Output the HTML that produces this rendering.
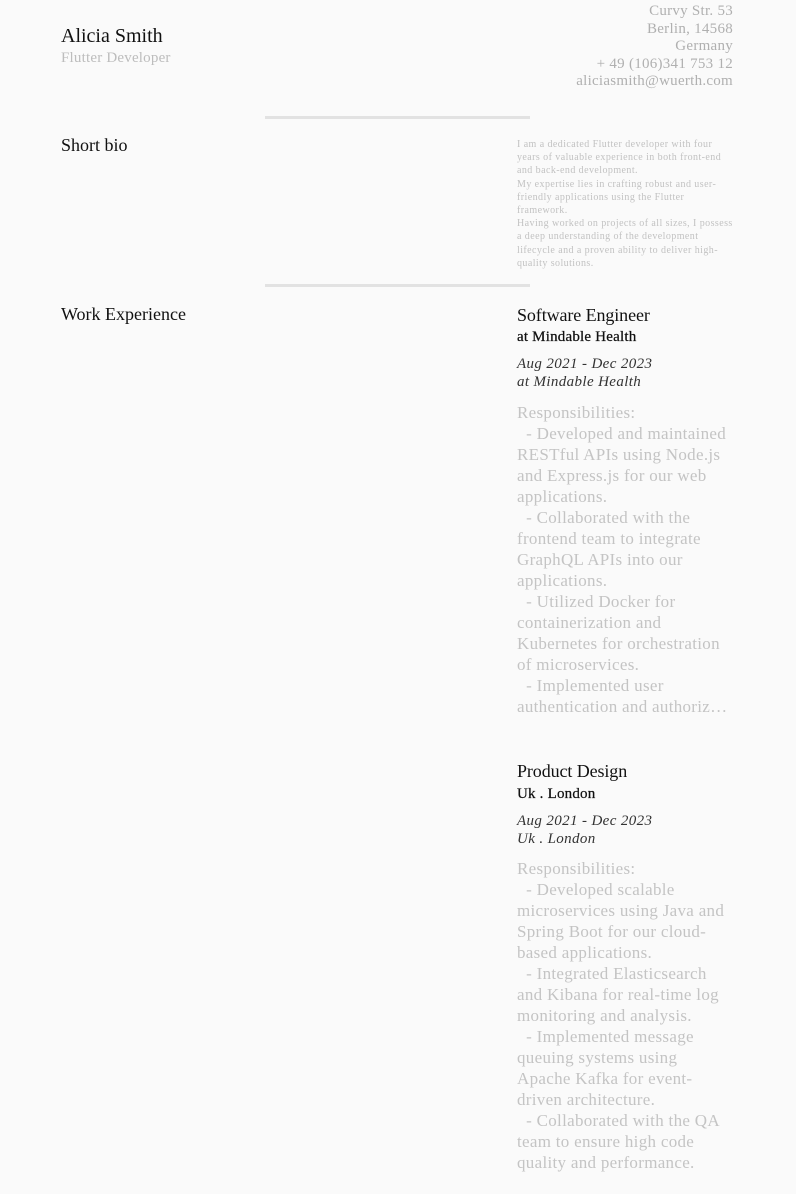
<!DOCTYPE html>
<html><head><meta charset="utf-8">
<style>
html,body{margin:0;padding:0;background:#fafafa;}
body{width:796px;height:1194px;position:relative;overflow:hidden;font-family:"Liberation Serif",serif;}
.a{position:absolute;white-space:nowrap;}
.name{left:61px;top:25px;font-size:20px;color:#111;letter-spacing:0px;}
.role{left:61px;top:50px;font-size:15px;color:#bdbdbd;letter-spacing:0.2px;}
.addr{right:63px;top:3px;font-size:15px;line-height:17.6px;color:#b0b0b0;text-align:right;letter-spacing:0.27px;}
.hr{position:absolute;left:265px;width:265px;height:3px;background:#e2e2e2;}
.h{font-size:18px;color:#111;letter-spacing:0px;}
.bio{left:517px;top:138px;font-size:10px;line-height:13.2px;color:#c2c2c2;letter-spacing:0.43px;}
.t{font-size:18px;color:#111;letter-spacing:-0.1px;}
.s{font-size:15px;color:#111;letter-spacing:0.2px;-webkit-text-stroke:0.25px #111;}
.d{font-size:15px;line-height:17.6px;font-style:italic;color:#333;letter-spacing:0.37px;}
.r{font-size:17px;line-height:21px;color:#c4c4c4;letter-spacing:0.3px;}
</style></head><body>
<div class="a name">Alicia Smith</div>
<div class="a role">Flutter Developer</div>
<div class="a addr">Curvy Str. 53<br>Berlin, 14568<br>Germany<br>+ 49 (106)341 753 12<br>aliciasmith@wuerth.com</div>
<div class="hr" style="top:116px"></div>
<div class="a h" style="left:61px;top:135px">Short bio</div>
<div class="a bio">I am a dedicated Flutter developer with four<br>years of valuable experience in both front-end<br>and back-end development.<br>My expertise lies in crafting robust and user-<br>friendly applications using the Flutter<br>framework.<br>Having worked on projects of all sizes, I possess<br>a deep understanding of the development<br>lifecycle and a proven ability to deliver high-<br>quality solutions.</div>
<div class="hr" style="top:284px"></div>
<div class="a h" style="left:61px;top:304px">Work Experience</div>

<div class="a t" style="left:517px;top:305px">Software Engineer</div>
<div class="a s" style="left:517px;top:329px">at Mindable Health</div>
<div class="a d" style="left:517px;top:356px">Aug 2021 - Dec 2023<br>at Mindable Health</div>
<div class="a r" style="left:517px;top:402px">Responsibilities:<br>&nbsp;&nbsp;- Developed and maintained<br>RESTful APIs using Node.js<br>and Express.js for our web<br>applications.<br>&nbsp;&nbsp;- Collaborated with the<br>frontend team to integrate<br>GraphQL APIs into our<br>applications.<br>&nbsp;&nbsp;- Utilized Docker for<br>containerization and<br>Kubernetes for orchestration<br>of microservices.<br>&nbsp;&nbsp;- Implemented user<br>authentication and authoriz…</div>

<div class="a t" style="left:517px;top:761px">Product Design</div>
<div class="a s" style="left:517px;top:786px">Uk . London</div>
<div class="a d" style="left:517px;top:813px">Aug 2021 - Dec 2023<br>Uk . London</div>
<div class="a r" style="left:517px;top:858px">Responsibilities:<br>&nbsp;&nbsp;- Developed scalable<br>microservices using Java and<br>Spring Boot for our cloud-<br>based applications.<br>&nbsp;&nbsp;- Integrated Elasticsearch<br>and Kibana for real-time log<br>monitoring and analysis.<br>&nbsp;&nbsp;- Implemented message<br>queuing systems using<br>Apache Kafka for event-<br>driven architecture.<br>&nbsp;&nbsp;- Collaborated with the QA<br>team to ensure high code<br>quality and performance.</div>
</body></html>
